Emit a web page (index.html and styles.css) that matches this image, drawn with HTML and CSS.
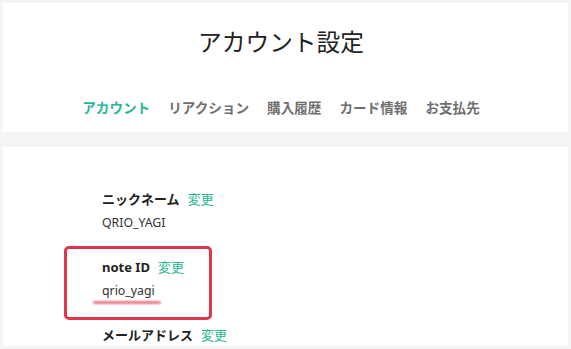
FILE: index.html
```html
<!DOCTYPE html>
<html lang="ja">
<head>
<meta charset="utf-8">
<title>アカウント設定</title>
<link rel="stylesheet" href="styles.css">
</head>
<body>
<div class="page">
  <header class="card head">
    <h1 class="title">アカウント設定</h1>
    <nav class="tabs">
      <a class="tab active">アカウント</a>
      <a class="tab">リアクション</a>
      <a class="tab">購入履歴</a>
      <a class="tab">カード情報</a>
      <a class="tab">お支払先</a>
    </nav>
  </header>
  <main class="card body">
    <section class="field">
      <div class="label-row"><span class="label">ニックネーム</span><a class="change">変更</a></div>
      <div class="value">QRIO_YAGI</div>
    </section>
    <section class="field">
      <div class="label-row"><span class="label">note ID</span><a class="change">変更</a></div>
      <div class="value">qrio_yagi</div>
    </section>
    <section class="field">
      <div class="label-row"><span class="label">メールアドレス</span><a class="change">変更</a></div>
      <div class="value">&nbsp;</div>
    </section>
    <div class="highlight"></div>
    <div class="squiggle"></div>
  </main>
</div>
</body>
</html>
```
FILE: styles.css
```css
html, body {
  margin: 0;
  padding: 0;
  background: #f4f6f6;
}
body {
  font-family: "Noto Sans", "Noto Sans CJK JP", sans-serif;
  color: #222;
}
.page {
  padding: 3px 3px 0 3px;
  display: flex;
  flex-direction: column;
  gap: 15px;
}
.card {
  background: #fff;
}
.head {
  height: 129px;
  box-sizing: border-box;
  padding: 22px 9px 0 0;
  display: flex;
  flex-direction: column;
  align-items: center;
}
.title {
  margin: 0;
  font-family: "Noto Sans CJK JP", sans-serif;
  font-size: 23.7px;
  font-weight: 400;
  line-height: 32px;
  color: #222;
}
.tabs {
  margin-top: 40px;
  display: flex;
  gap: 18px;
  font-family: "Noto Sans CJK JP", sans-serif;
  font-size: 13.6px;
  line-height: 20px;
  font-weight: 700;
}
.tab {
  color: #6f6f6f;
  text-decoration: none;
}
.tab.active {
  color: #2cb696;
}
.body {
  position: relative;
  height: 199px;
  box-sizing: border-box;
  padding: 42px 0 0 99px;
  overflow: hidden;
  display: flex;
  flex-direction: column;
  gap: 24px;
}
.field {
  display: flex;
  flex-direction: column;
  gap: 4px;
}
.label-row {
  display: flex;
  align-items: center;
  gap: 8px;
  line-height: 20px;
  font-size: 13px;
}
.label {
  font-weight: 700;
  color: #222;
  font-family: "Noto Sans", "Noto Sans CJK JP", sans-serif;
}
.change {
  color: #2cb696;
  font-family: "Noto Sans CJK JP", sans-serif;
}
.value {
  font-size: 12.3px;
  line-height: 20px;
  color: #333;
}
.highlight {
  position: absolute;
  left: 61px;
  top: 99px;
  width: 148px;
  height: 74px;
  box-sizing: border-box;
  border: 3px solid #e0354b;
  border-radius: 5px;
}
.squiggle {
  position: absolute;
  left: 90px;
  top: 154px;
  width: 68px;
  height: 3px;
  border-radius: 2px;
  background: #e77482;
  filter: blur(0.9px);
}
```
